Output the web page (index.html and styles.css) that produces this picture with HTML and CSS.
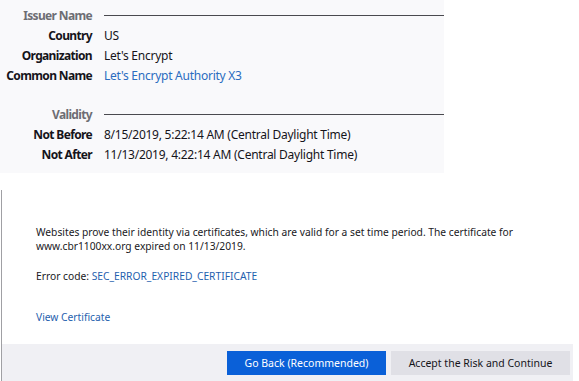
FILE: index.html
```html
<!DOCTYPE html>
<html>
<head>
<meta charset="utf-8">
<link rel="stylesheet" href="styles.css">
</head>
<body>
<div class="panel">
  <div class="grid">
    <div class="label section">Issuer Name</div><div class="rule"></div>
    <div class="label">Country</div><div class="value">US</div>
    <div class="label">Organization</div><div class="value">Let's Encrypt</div>
    <div class="label">Common Name</div><div class="value link">Let's Encrypt Authority X3</div>
  </div>
  <div class="grid second">
    <div class="label section">Validity</div><div class="rule"></div>
    <div class="label">Not Before</div><div class="value">8/15/2019, 5:22:14 AM (Central Daylight Time)</div>
    <div class="label">Not After</div><div class="value">11/13/2019, 4:22:14 AM (Central Daylight Time)</div>
  </div>
</div>
<div class="error">
  <div class="body">
    <p class="desc">Websites prove their identity via certificates, which are valid for a set time period. The certificate for www.cbr1100xx.org expired on 11/13/2019.</p>
    <p class="code">Error code: <a class="blue">SEC_ERROR_EXPIRED_CERTIFICATE</a></p>
    <p class="view"><a class="blue">View Certificate</a></p>
  </div>
  <div class="footer">
    <button class="btn primary">Go Back (Recommended)</button>
    <button class="btn secondary">Accept the Risk and Continue</button>
  </div>
</div>
</body>
</html>
```
FILE: styles.css
```css
html, body {
  margin: 0;
  padding: 0;
  background: #ffffff;
}
body {
  font-family: "Noto Sans", "Open Sans", sans-serif;
  color: #15141a;
  width: 579px;
  height: 381px;
  overflow: hidden;
}
.panel {
  width: 444px;
  height: 173px;
  box-sizing: border-box;
  background: #f9f9fb;
  padding-top: 5px;
}
.grid {
  display: grid;
  grid-template-columns: 92px 1fr;
  grid-auto-rows: 20px;
  column-gap: 12px;
  align-items: center;
  font-size: 12px;
}
.grid.second {
  margin-top: 19px;
}
.label {
  text-align: right;
  font-weight: 700;
  color: #15141a;
  white-space: nowrap;
  letter-spacing: -0.65px;
}
.label.section {
  color: #6d6d73;
}
.rule {
  height: 1px;
  background: #4a4a4f;
  margin-top: 1px;
}
.value {
  white-space: nowrap;
  letter-spacing: -0.25px;
}
.link {
  color: #2a6cc0;
}
.error {
  margin-top: 17px;
  border-left: 1px solid #a0a0a4;
  margin-left: 1px;
  width: 571px;
  height: 191px;
  display: flex;
  flex-direction: column;
}
.body {
  flex: 1;
  padding: 35px 0 0 34px;
  font-size: 10.25px;
  color: #202024;
}
.body p {
  margin: 0;
  line-height: 14px;
}
.desc {
  width: 500px;
}
.code {
  margin-top: 16px !important;
}
.view {
  margin-top: 27px !important;
}
.blue {
  color: #1f5fae;
}
.footer {
  height: 37px;
  background: #f0f0f4;
  display: flex;
  justify-content: flex-end;
  align-items: flex-start;
  gap: 5px;
  padding: 7px 3px 0 0;
  box-sizing: border-box;
}
.btn {
  font-family: "Noto Sans", "Open Sans", sans-serif;
  font-size: 10.5px;
  height: 24px;
  border: none;
  border-radius: 0;
  padding: 0;
  margin: 0;
}
.primary {
  width: 159px;
  background: #0a60d8;
  color: #ffffff;
}
.secondary {
  width: 179px;
  background: #e0e0e6;
  color: #15141a;
}
```
